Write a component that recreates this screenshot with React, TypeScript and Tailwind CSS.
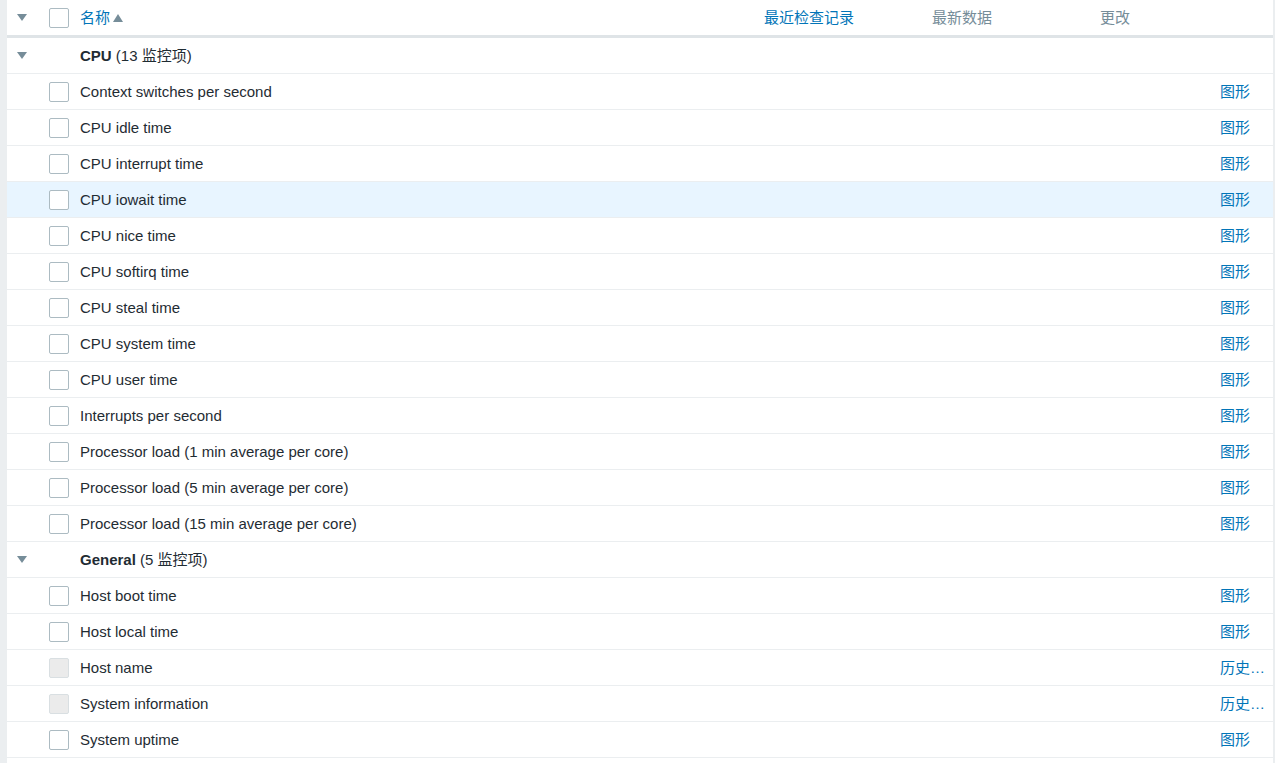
import React from 'react';

type Item = { name: string; link: string; disabled?: boolean; hover?: boolean };
type Group = { name: string; count: number; items: Item[] };

const groups: Group[] = [
  {
    name: 'CPU',
    count: 13,
    items: [
      { name: 'Context switches per second', link: '图形' },
      { name: 'CPU idle time', link: '图形' },
      { name: 'CPU interrupt time', link: '图形' },
      { name: 'CPU iowait time', link: '图形', hover: true },
      { name: 'CPU nice time', link: '图形' },
      { name: 'CPU softirq time', link: '图形' },
      { name: 'CPU steal time', link: '图形' },
      { name: 'CPU system time', link: '图形' },
      { name: 'CPU user time', link: '图形' },
      { name: 'Interrupts per second', link: '图形' },
      { name: 'Processor load (1 min average per core)', link: '图形' },
      { name: 'Processor load (5 min average per core)', link: '图形' },
      { name: 'Processor load (15 min average per core)', link: '图形' },
    ],
  },
  {
    name: 'General',
    count: 5,
    items: [
      { name: 'Host boot time', link: '图形' },
      { name: 'Host local time', link: '图形' },
      { name: 'Host name', link: '历史记录', disabled: true },
      { name: 'System information', link: '历史记录', disabled: true },
      { name: 'System uptime', link: '图形' },
    ],
  },
];

const Caret = () => (
  <svg width="10" height="7" viewBox="0 0 10 7">
    <path d="M0 0 H10 L5 7 Z" fill="#768d99" />
  </svg>
);

const Checkbox = ({ disabled }: { disabled?: boolean }) => (
  <div
    className={`ml-[12px] w-[20px] h-[20px] rounded-[2px] border ${
      disabled ? 'bg-[#ebebeb] border-[#d9dfe2]' : 'bg-white border-[#acbbc2]'
    }`}
  />
);

const Row = ({ children, hover, header }: { children: React.ReactNode; hover?: boolean; header?: boolean }) => (
  <div
    className={`flex items-center ${
      header ? 'h-[38px] border-b-[3px] border-[#dfe4e7]' : 'h-[36px] border-b border-[#ebeef0]'
    } ${hover ? 'bg-[#e8f5ff]' : 'bg-white'}`}
  >
    {children}
  </div>
);

export default function App() {
  return (
    <div
      className="flex w-[1275px] h-[763px] overflow-hidden bg-white text-[15px] leading-[18px] text-[#1f2c33]"
      style={{ fontFamily: '"Liberation Sans", Arial, "Noto Sans CJK SC", sans-serif' }}
    >
      <div className="w-[7px] shrink-0 bg-[#ebeef0]" />
      <div className="w-[1266px] shrink-0">
        <Row header>
          <div className="w-[30px] flex justify-center">
            <Caret />
          </div>
          <div className="w-[43px]">
            <Checkbox />
          </div>
          <div className="w-[684px] flex items-center gap-[3px] text-[#0275b8]">
            名称
            <svg width="10" height="8" viewBox="0 0 10 8">
              <path d="M0 8 H10 L5 0 Z" fill="#768d99" />
            </svg>
          </div>
          <div className="w-[168px] text-[#0275b8]">最近检查记录</div>
          <div className="w-[168px] text-[#768d99]">最新数据</div>
          <div className="w-[120px] text-[#768d99]">更改</div>
          <div className="w-[53px]" />
        </Row>
        {groups.map(g => (
          <React.Fragment key={g.name}>
            <Row>
              <div className="w-[30px] flex justify-center">
                <Caret />
              </div>
              <div className="w-[43px]" />
              <div className="flex-1 pt-[1px]">
                <span className="font-bold">{g.name}</span> ({g.count} 监控项)
              </div>
            </Row>
            {g.items.map(it => (
              <Row key={it.name} hover={it.hover}>
                <div className="w-[30px]" />
                <div className="w-[43px]">
                  <Checkbox disabled={it.disabled} />
                </div>
                <div className="w-[684px] truncate pt-[1px]">{it.name}</div>
                <div className="w-[168px]" />
                <div className="w-[168px]" />
                <div className="w-[120px]" />
                <div className="w-[53px] pr-[2px] truncate pt-[1px] text-[#0275b8]">{it.link}</div>
              </Row>
            ))}
          </React.Fragment>
        ))}
      </div>
      <div className="w-[2px] shrink-0 bg-[#ebeef0]" />
    </div>
  );
}
